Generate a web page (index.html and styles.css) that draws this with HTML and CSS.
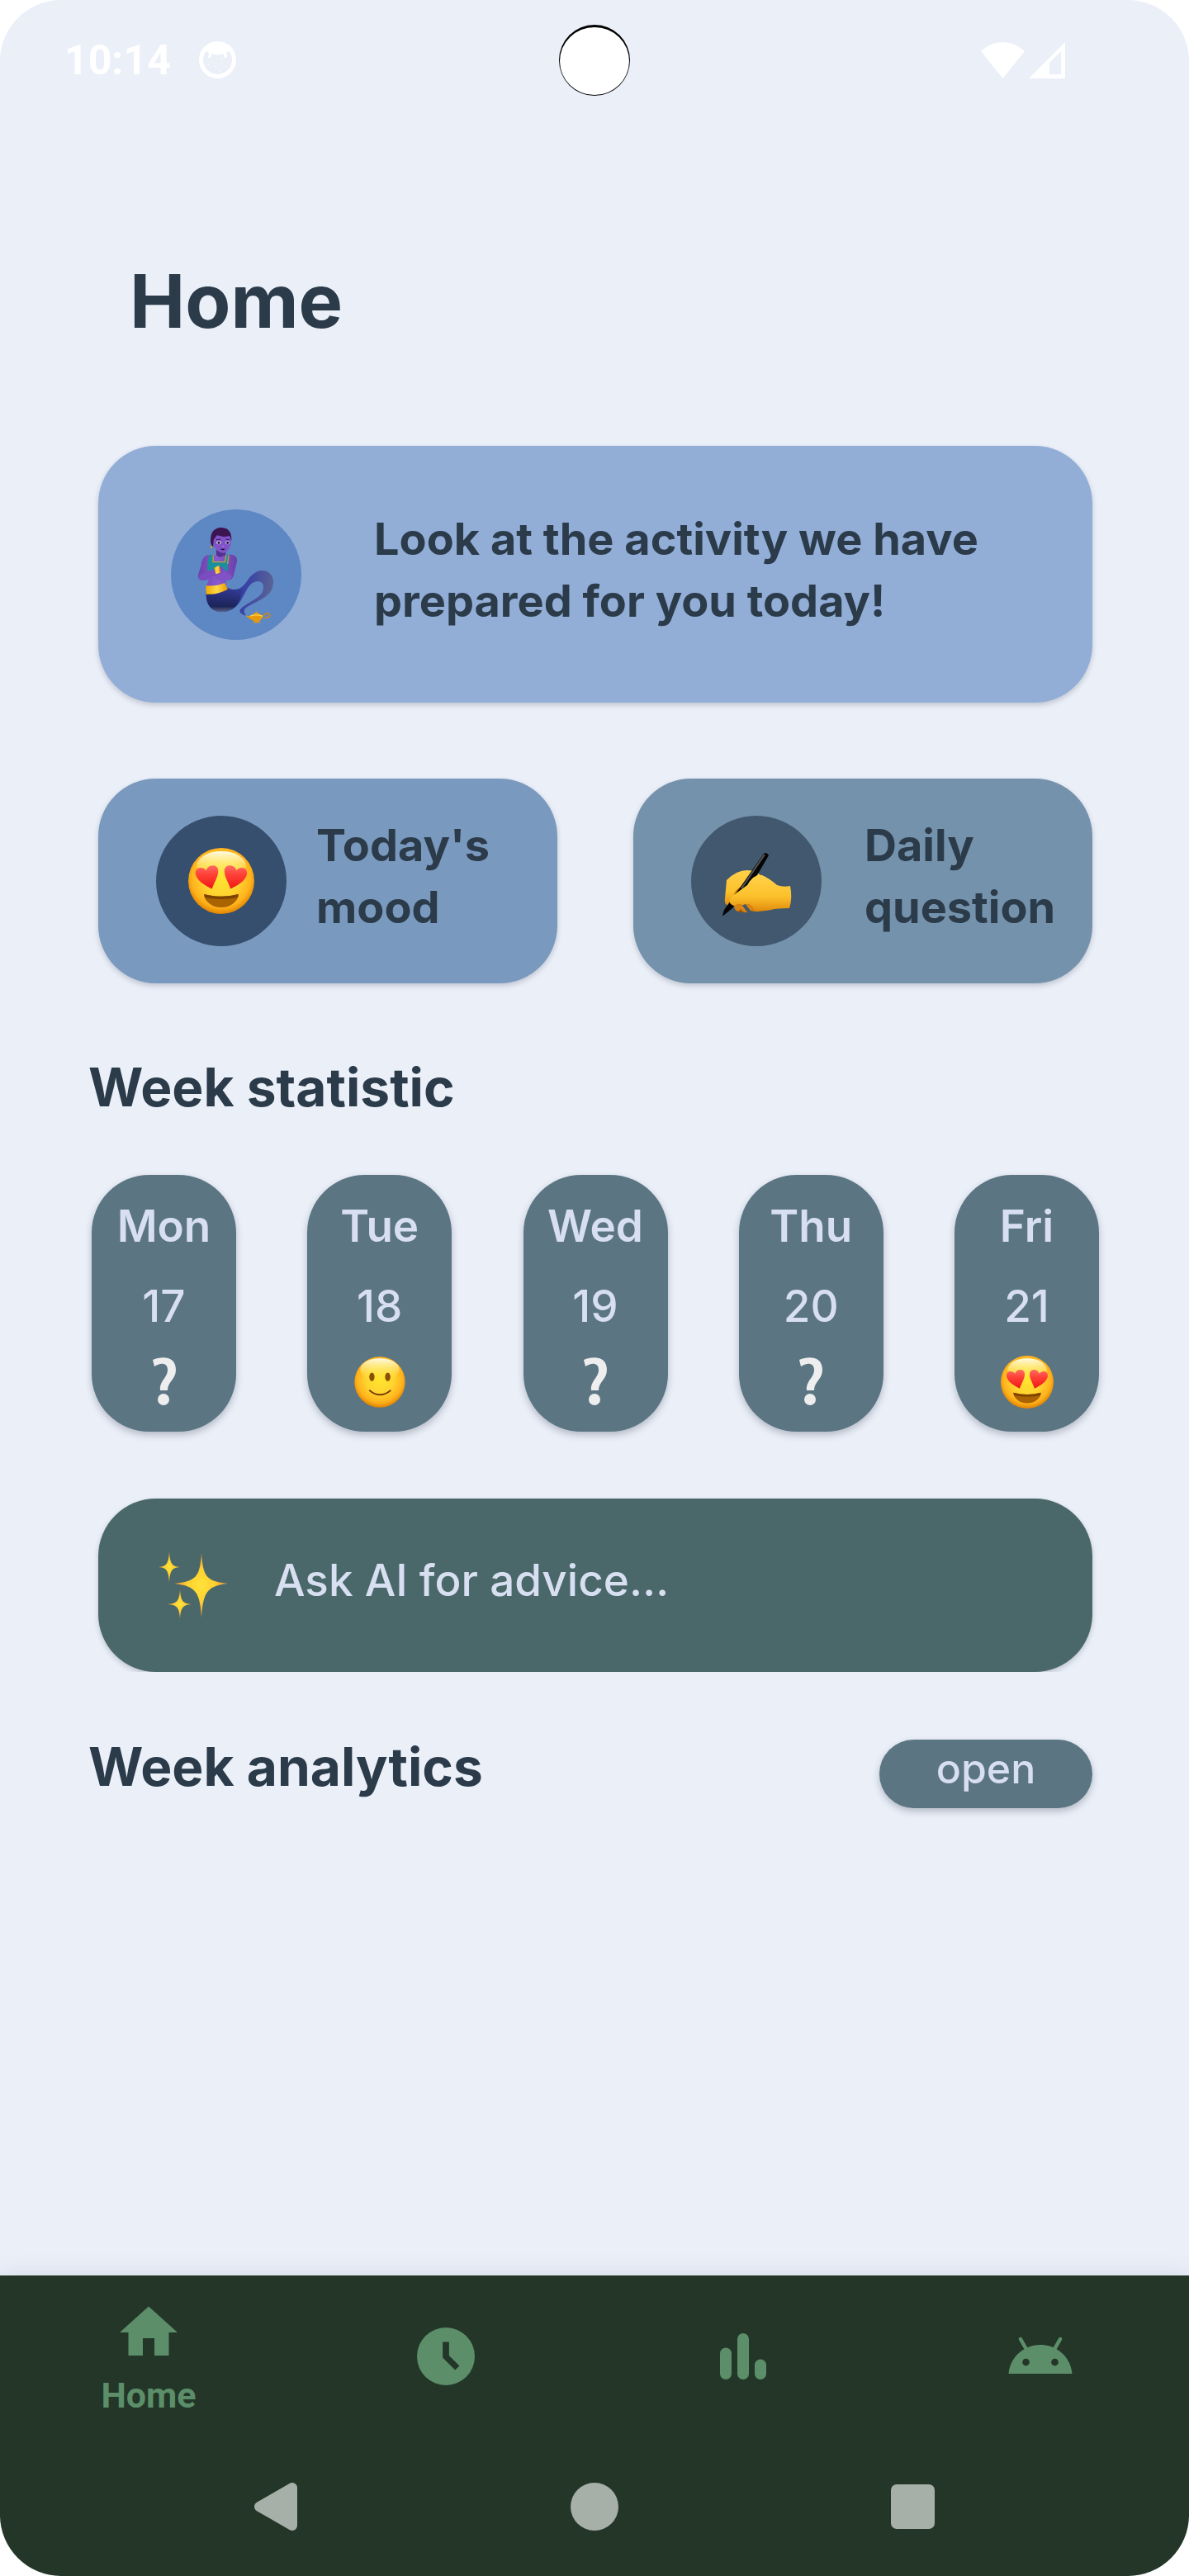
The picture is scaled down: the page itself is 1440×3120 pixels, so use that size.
FILE: index.html
```html
<!DOCTYPE html>
<html lang="en">
<head>
<meta charset="utf-8">
<meta name="viewport" content="width=device-width, initial-scale=1">
<title>Home</title>
<link rel="stylesheet" href="styles.css">
</head>
<body>
<svg class="defs" aria-hidden="true">
  <defs>
    <radialGradient id="face" cx="50%" cy="45%" r="55%">
      <stop offset="0" stop-color="#ffe52e"/>
      <stop offset=".5" stop-color="#ffd42f"/>
      <stop offset=".82" stop-color="#ffb21c"/>
      <stop offset="1" stop-color="#e08300"/>
    </radialGradient>
    <linearGradient id="shine" x1="0" y1="0" x2="0" y2="1">
      <stop offset="0" stop-color="#fffff0" stop-opacity=".95"/>
      <stop offset="1" stop-color="#ffee40" stop-opacity="0"/>
    </linearGradient>
    <linearGradient id="heart" x1="0" y1="0" x2="0" y2="1">
      <stop offset="0" stop-color="#ff6a66"/>
      <stop offset=".4" stop-color="#ff4136"/>
      <stop offset="1" stop-color="#ee1717"/>
    </linearGradient>
    <radialGradient id="spark">
      <stop offset="0" stop-color="#ffe23a"/>
      <stop offset=".5" stop-color="#ffd030"/>
      <stop offset="1" stop-color="#f0903a"/>
    </radialGradient>
    <linearGradient id="tail" x1="180" y1="300" x2="420" y2="340" gradientUnits="userSpaceOnUse">
      <stop offset="0" stop-color="#2d2f82"/>
      <stop offset=".6" stop-color="#3843a6"/>
      <stop offset="1" stop-color="#5b6494"/>
    </linearGradient>
    <linearGradient id="tailShade" x1="0" y1="330" x2="0" y2="424" gradientUnits="userSpaceOnUse">
      <stop offset="0" stop-color="#1d2560" stop-opacity="0"/>
      <stop offset=".75" stop-color="#1c2458"/>
      <stop offset="1" stop-color="#6a7192"/>
    </linearGradient>
    <linearGradient id="gold" x1="0" y1="0" x2="1" y2="0">
      <stop offset="0" stop-color="#f2a900"/>
      <stop offset=".5" stop-color="#ffd94a"/>
      <stop offset="1" stop-color="#e69500"/>
    </linearGradient>
    <linearGradient id="skin" x1="0" y1="0" x2="1" y2="0">
      <stop offset="0" stop-color="#6a41ab"/>
      <stop offset=".5" stop-color="#8a5bd0"/>
      <stop offset="1" stop-color="#6840a8"/>
    </linearGradient>
    <linearGradient id="hand" x1="0" y1="0" x2="0" y2="1">
      <stop offset="0" stop-color="#ffd24a"/>
      <stop offset=".6" stop-color="#fcc02a"/>
      <stop offset="1" stop-color="#e08c0c"/>
    </linearGradient>
  </defs>
  <symbol id="emoji-love" viewBox="0 0 100 100">
    <circle cx="50" cy="50" r="50" fill="url(#face)"/>
    <ellipse cx="50" cy="27" rx="37" ry="22" fill="url(#shine)"/>
    <path d="M36 62C26 57 13 50 11 39C10 29 22 27 27 34C29 26 42 23 45 32C47 42 39 52 36 62Z" fill="url(#heart)"/>
    <path d="M64 62C74 57 87 50 89 39C90 29 78 27 73 34C71 26 58 23 55 32C53 42 61 52 64 62Z" fill="url(#heart)"/>
    <path d="M24 70Q50 77 76 70C76 80 65 90 50 90S24 80 24 70Z" fill="#a96300"/>
    <path d="M24 70Q50 77 76 70L75 75Q50 80 25 75Z" fill="#7c4300"/>
  </symbol>
  <symbol id="emoji-smile" viewBox="0 0 100 100">
    <circle cx="50" cy="50" r="48" fill="url(#face)"/>
    <ellipse cx="50" cy="26" rx="37" ry="21" fill="url(#shine)"/>
    <ellipse cx="35" cy="40" rx="5" ry="8" fill="#8a4f00"/>
    <ellipse cx="65" cy="40" rx="5" ry="8" fill="#8a4f00"/>
    <path d="M31 66Q50 82 70 66" fill="none" stroke="#7a3d00" stroke-width="3" stroke-linecap="round"/>
  </symbol>
  <symbol id="emoji-unknown" viewBox="0 0 64 64">
    <path d="M18 5C30 0 46 1 46 17C46 29 36 31 36 42H27C26 30 36 27 36 17C36 8 27 8 20 13Z" fill="#eeeeee"/>
    <circle cx="31" cy="53" r="7" fill="#eeeeee"/>
  </symbol>
</svg>

<div class="screen">
  <header class="status">
    <div class="status-left">
      <time>10:14</time>
      <svg class="status-face" viewBox="0 0 45 45" aria-hidden="true">
        <circle cx="22.500" cy="22.500" r="20" fill="none" stroke="#fff" stroke-width="5"/>
        <path d="M8 10Q22 -4 37 10L33 15 34 20 31 20 29 15Q22 18 16 15L14 20 11 20 12 15Z" fill="#fff"/>
        <g fill="#fff" opacity=".6"><circle cx="12" cy="28" r="1"/><circle cx="20" cy="31" r="1"/><circle cx="27" cy="27" r="1"/><circle cx="33" cy="30" r="1"/><circle cx="25" cy="36" r="1"/><circle cx="28" cy="21" r="1"/></g>
      </svg>
    </div>
    <svg class="camera" viewBox="0 0 86 86" aria-hidden="true">
      <circle cx="43" cy="43" r="43" fill="#000"/>
      <ellipse cx="43" cy="44" rx="42" ry="41" fill="#fff"/>
    </svg>
    <div class="status-right">
      <svg class="wifi" viewBox="0 0 53 44" aria-hidden="true"><path d="M26.500 44L0 11Q12 0 26.500 0T53 11Z" fill="#fff"/></svg>
      <svg class="signal" viewBox="0 0 44 44" aria-hidden="true"><path d="M44 0V44H0ZM39 11L25 25V39H39Z" fill="#fff" fill-rule="evenodd"/></svg>
    </div>
  </header>

  <main class="content">
    <h1>Home</h1>

    <a class="card activity" href="#activity">
      <svg class="badge" viewBox="51 48 474 474" aria-hidden="true">
        <circle cx="288" cy="285" r="237" fill="#5d88c4"/>
        <path d="M179 352C190 340 240 330 256 332C285 347 307 337 325 312C347 278 370 265 397 272C424 282 430 315 416 342C402 370 355 385 328 402C315 411 312 420 327 435C306 430 293 419 308 406C327 389 370 373 383 349C394 323 382 307 363 310C330 315 322 356 300 387C280 415 250 424 222 419C193 412 178 390 179 352Z" fill="url(#tail)"/>
        <path d="M179 352C205 358 240 340 256 332C280 346 300 340 316 328C304 356 306 378 286 400C270 416 247 424 222 419C193 412 178 390 179 352Z" fill="url(#tailShade)"/>
        <path d="M215 196H250V220L240 232H218Z" fill="#56308f"/>
        <path d="M182 214Q162 224 161 250L150 286Q148 306 166 306L190 300L178 330H252L250 305L268 303Q278 299 281 280L291 236Q293 215 272 212H252L230 222 212 214Z" fill="url(#skin)"/>
        <path d="M190 214L205 212 206 236H246L250 212 260 214 257 270H184Q182 236 190 214Z" fill="#1b8f9c"/>
        <path d="M205 214L204 239H247L252 214M261 215L257 246" fill="none" stroke="#c7a03c" stroke-width="4"/>
        <path d="M152 288L210 264L236 256 250 274 228 290 174 306Q150 308 152 288Z" fill="#7b4cc0"/>
        <path d="M196 294L246 276L274 290Q270 308 246 307L200 300Z" fill="#8252c7"/>
        <path d="M208 260L226 251 231 278 214 283Z" fill="url(#gold)"/>
        <path d="M178 325Q218 328 246 315L258 338Q218 360 179 356Z" fill="url(#gold)"/>
        <path d="M201 150Q204 126 236 124Q272 130 269 168Q266 198 243 207Q216 205 204 174Z" fill="#8053c9"/>
        <path d="M196 172Q190 116 233 114Q273 114 271 162L264 144 244 148 218 142 206 158 204 190Z" fill="#3b1450"/>
        <ellipse cx="225" cy="169" rx="8" ry="6" fill="#fff"/><ellipse cx="257" cy="169" rx="7" ry="6" fill="#fff"/>
        <circle cx="225" cy="169" r="5" fill="#241540"/><circle cx="257" cy="169" r="5" fill="#241540"/>
        <path d="M216 158L232 156M250 156L264 158" stroke="#3b1450" stroke-width="3"/>
        <path d="M231 191H248Q240 200 231 191Z" fill="#160a20"/>
        <path d="M239 180L243 183" stroke="#b493e8" stroke-width="3"/>
        <circle cx="199" cy="185" r="4" fill="#e0a42c"/>
        <path d="M321 433Q338 438 346 432Q356 424 361 419Q370 428 386 434Q382 448 369 455L380 460H346L356 455Q340 449 321 433Z" fill="#e89a0c"/>
        <path d="M385 434Q402 420 411 430Q414 442 386 442" fill="none" stroke="#d4870e" stroke-width="4"/>
        <path d="M340 435Q360 428 384 436" stroke="#ffd44c" stroke-width="4" fill="none"/>
      </svg>
      <span class="card-text">Look at the activity we have prepared for you today!</span>
    </a>

    <div class="pair">
      <a class="card mood" href="#mood">
        <span class="badge badge-mood"><svg class="face" aria-hidden="true"><use href="#emoji-love"/></svg></span>
        <span class="card-text">Today's mood</span>
      </a>
      <a class="card question" href="#question">
        <svg class="badge" viewBox="0 0 158 158" aria-hidden="true">
          <circle cx="79" cy="79" r="79" fill="#42586e"/>
          <path d="M43 78Q55 66 68 66Q78 66 84 72L74 90 56 110 44 108Q40 107 41 100Z" fill="url(#hand)"/>
          <path d="M50 101Q52 91 60 86L65 88 55 101Z" fill="#b96804"/>
          <path d="M54 104L70 118 66 116 60 117 54 114Z" fill="#a85400"/>
          <path d="M88 46Q91 43 94 48L73 84 50 112 39 121H38L40 114 60 86Z" fill="#050505"/>
          <path d="M89 47L61 88" stroke="#565656" stroke-width="2"/>
          <path d="M47 106Q45 100 53 95L68 84Q76 70 86 72Q95 76 104 84Q112 87 120 85Q123 100 119 112Q110 112 101 113Q84 117 72 115L66 107 60 109Q52 111 47 106Z" fill="url(#hand)"/>
          <path d="M52 110Q55 106 61 107L68 117Q63 118 60 113L57 116Q53 115 52 110ZM66 107Q72 105 77 114L84 116Q72 118 66 107Z" fill="#d98310"/>
        </svg>
        <span class="card-text">Daily question</span>
      </a>
    </div>

    <section class="week">
      <h2>Week statistic</h2>
      <ul class="days">
        <li class="day"><strong>Mon</strong><span>17</span><svg class="day-mood" role="img" aria-label="No mood"><use href="#emoji-unknown"/></svg></li>
        <li class="day"><strong>Tue</strong><span>18</span><svg class="day-mood" role="img" aria-label="Good"><use href="#emoji-smile"/></svg></li>
        <li class="day"><strong>Wed</strong><span>19</span><svg class="day-mood" role="img" aria-label="No mood"><use href="#emoji-unknown"/></svg></li>
        <li class="day"><strong>Thu</strong><span>20</span><svg class="day-mood" role="img" aria-label="No mood"><use href="#emoji-unknown"/></svg></li>
        <li class="day"><strong>Fri</strong><span>21</span><svg class="day-mood" role="img" aria-label="In love"><use href="#emoji-love"/></svg></li>
      </ul>
    </section>

    <button class="card advice" type="button">
      <svg class="sparkles" viewBox="0 0 84 82" aria-hidden="true">
        <path d="M52 2C54 31 58 36 84 39C58 42 54 50 52 80C50 50 46 42 19 39C46 36 50 31 52 2Z" fill="url(#spark)"/>
        <path d="M13 0C14 15 16 18 26 19C16 20 14 23 13 38C12 23 10 20 0 19C10 18 12 15 13 0Z" fill="url(#spark)"/>
        <path d="M26 46C27 60 29 63 40 64C29 65 27 68 26 82C25 68 23 65 11 64C23 63 25 60 26 46Z" fill="url(#spark)"/>
      </svg>
      <span>Ask AI for advice…</span>
    </button>

    <section class="analytics">
      <h2>Week analytics</h2>
      <button class="open" type="button">open</button>
    </section>
  </main>

  <footer class="bottom">
    <nav class="tabs">
      <a class="tab" href="#home">
        <svg viewBox="0 0 24 24" aria-hidden="true"><path d="M10 20v-6h4v6h5v-8h3L12 3 2 12h3v8z"/></svg>
        <span>Home</span>
      </a>
      <a class="tab" href="#history" aria-label="History">
        <svg viewBox="0 0 24 24" aria-hidden="true"><path fill-rule="evenodd" d="M12 2a10 10 0 1 0 0 20a10 10 0 1 0 0-20zM10.900 7h2.200v4.700l3.600 3.600-1.500 1.400-4.300-4.300z"/></svg>
      </a>
      <a class="tab" href="#stats" aria-label="Statistics">
        <svg viewBox="0 0 24 24" aria-hidden="true"><rect x="4" y="9" width="4" height="11" rx="2"/><rect x="10" y="4" width="4" height="16" rx="2"/><rect x="16" y="13" width="4" height="7" rx="2"/></svg>
      </a>
      <a class="tab" href="#assistant" aria-label="Assistant">
        <svg viewBox="0 0 24 24" aria-hidden="true"><path d="M17.600 9.480l1.840-3.180c.16-.31.04-.69-.26-.85-.29-.15-.65-.06-.83.22l-1.880 3.240c-2.860-1.210-6.080-1.210-8.940 0L5.650 5.670c-.19-.29-.58-.38-.87-.2-.28.18-.37.54-.22.83L6.400 9.480C3.300 11.250 1.280 14.440 1 18h22c-.28-3.560-2.300-6.750-5.400-8.520zM7 15.250a1.250 1.250 0 1 1 0-2.500 1.250 1.250 0 0 1 0 2.500zm10 0a1.250 1.250 0 1 1 0-2.500 1.250 1.250 0 0 1 0 2.500z"/></svg>
      </a>
    </nav>
    <div class="system">
      <button type="button" aria-label="Back"><svg viewBox="0 0 58 58" aria-hidden="true"><path d="M48 6V52L8 29Z" stroke="#a7b0a8" stroke-width="12" stroke-linejoin="round"/></svg></button>
      <button type="button" aria-label="Home screen"><svg viewBox="0 0 58 58" aria-hidden="true"><circle cx="29" cy="29" r="29"/></svg></button>
      <button type="button" aria-label="Recent apps"><svg viewBox="0 0 58 58" aria-hidden="true"><rect x="3" y="2" width="53" height="54" rx="7"/></svg></button>
    </div>
  </footer>
</div>
</body>
</html>
```
FILE: styles.css
```css
* { box-sizing: border-box; }

body {
  margin: 0;
  background: #fff;
  color: #2b3b4a;
  font-family: Inter, "Liberation Sans", sans-serif;
  font-size: 53px;
  line-height: 75px;
}

h1, h2, ul { margin: 0; padding: 0; }
svg { display: block; flex: none; }
a { color: inherit; text-decoration: none; }
button { border: 0; padding: 0; background: none; font: inherit; color: inherit; text-align: left; }

.defs { position: absolute; width: 0; height: 0; }

.screen {
  display: flex;
  flex-direction: column;
  min-height: 100vh;
  overflow: hidden;
  border-radius: 74px;
  background: #eaeff8;
}

/* status bar */
.status {
  display: grid;
  grid-template-columns: 1fr 86px 1fr;
  align-items: center;
  height: 145px;
}
.status-left, .status-right { display: flex; align-items: center; }
.status-left { gap: 34px; padding-left: 78px; color: #fff; font: 700 50px/60px Roboto, sans-serif; }
.status-right { justify-content: flex-end; gap: 5px; padding-right: 150px; }
.status-face { width: 45px; height: 45px; }
.camera { width: 86px; height: 86px; }
.wifi { width: 53px; height: 44px; }
.signal { width: 44px; height: 44px; }

/* page content */
.content { flex: 1; padding: 164px 117px 80px 119px; }
h1 { padding-left: 38px; font-size: 90px; font-weight: 700; line-height: 112px; }
h2 { font-size: 64px; font-weight: 700; line-height: 80px; }

.card {
  display: flex;
  align-items: center;
  border-radius: 70px;
  box-shadow: 0 3px 6px rgba(40, 50, 70, .22);
}
.card-text { padding-bottom: 12px; font-size: 54px; font-weight: 700; }
.badge { width: 158px; height: 158px; flex: none; }

.activity { min-height: 311px; margin-top: 119px; padding: 0 88px; gap: 88px; background: #92aed7; }

.pair { display: grid; grid-template-columns: 1fr 1fr; gap: 92px; margin-top: 92px; }
.mood, .question { min-height: 248px; padding-left: 70px; }
.mood { gap: 36px; padding-right: 60px; background: #7a99bf; }
.question { gap: 52px; background: #7592ac; }
.badge-mood { display: grid; place-items: center; border-radius: 50%; background: #364f6e; }
.face { width: 80px; height: 80px; }

.week { margin: 86px -8px 0 -12px; }
.days { display: flex; justify-content: space-between; margin-top: 66px; padding-left: 4px; list-style: none; }
.day {
  display: flex;
  flex-direction: column;
  align-items: center;
  gap: 22px;
  width: 175px;
  min-height: 311px;
  padding-top: 25px;
  border-radius: 70px;
  background: #5b7583;
  box-shadow: 0 4px 8px rgba(40, 50, 70, .28);
  color: #d7dff1;
  font-weight: 500;
}
.day strong { font-weight: 600; }
.day-mood { width: 64px; height: 64px; }

.advice {
  width: 100%;
  min-height: 210px;
  margin-top: 81px;
  padding: 0 73px;
  gap: 56px;
  background: #4a686a;
  color: #d7dff1;
  clip-path: inset(-20px -20px 0);
}
.advice span { padding-bottom: 12px; font-weight: 500; }
.sparkles { width: 84px; height: 82px; }

.analytics { display: flex; align-items: center; justify-content: space-between; margin: 75px 0 0 -12px; }
.analytics h2 { padding-bottom: 16px; }
.open {
  width: 258px;
  height: 83px;
  padding-bottom: 12px;
  border-radius: 42px;
  background: #5b7583;
  box-shadow: 0 4px 8px rgba(40, 50, 70, .28);
  color: #d7dff1;
  font-size: 50px;
  font-weight: 500;
  line-height: 71px;
  text-align: center;
}

/* bottom navigation */
.bottom { background: #233628; box-shadow: 0 0 28px rgba(40, 50, 70, .1); }
.tabs { display: grid; grid-template-columns: repeat(4, 1fr); height: 196px; }
.tab {
  display: flex;
  flex-direction: column;
  align-items: center;
  justify-content: center;
  gap: 10px;
  color: #5b8e69;
  font: 700 43px/48px Roboto, sans-serif;
}
.tab svg { width: 84px; height: 84px; fill: currentColor; }

.system { display: flex; align-items: center; justify-content: center; gap: 327px; height: 168px; }
.system svg { width: 58px; height: 58px; fill: #a7b0a8; }
```
